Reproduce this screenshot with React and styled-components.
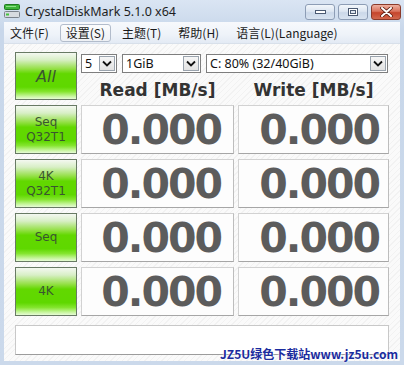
import React from 'react';
import styled, { createGlobalStyle } from 'styled-components';

const GlobalStyle = createGlobalStyle`
  html, body {
    margin: 0;
    padding: 0;
    overflow: hidden;
  }
  body {
    font-family: "Noto Sans", "Noto Sans CJK SC", sans-serif;
  }
`;

const Window = styled.div`
  position: relative;
  width: 404px;
  height: 365px;
  box-sizing: border-box;
  padding: 0 4px 4px;
  display: flex;
  flex-direction: column;
  background: linear-gradient(#dae5f3, #c8d7ea 30px, #cbd9eb);
`;

const TitleBar = styled.div`
  height: 22px;
  display: flex;
  align-items: center;
`;

const Title = styled.span`
  margin-left: 5px;
  font-size: 12.5px;
  color: #1e1e1e;
  flex: 1;
`;

const Caption = styled.div`
  display: flex;
  gap: 3px;
  margin-right: -1px;
  margin-top: 1px;
`;

const CaptionButton = styled.div`
  width: 30px;
  height: 16px;
  box-sizing: border-box;
  border: 1px solid ${p => (p.close ? '#8a3a2a' : '#8d9db5')};
  border-radius: 3px;
  display: flex;
  align-items: center;
  justify-content: center;
  background: ${p =>
    p.close
      ? 'linear-gradient(#eeb0a0, #d9725c 45%, #c5452c 55%, #d2684e)'
      : 'linear-gradient(#f2f6fb, #dde6f1 45%, #cbd8e9 55%, #d8e3f0)'};
`;

const MenuBar = styled.div`
  height: 21px;
  display: flex;
  align-items: center;
  gap: 5px;
  background: linear-gradient(#f7f9fc, #eef3f9 60%, #e3eaf4);
  border-bottom: 1px solid #d8e0ea;
`;

const MenuItem = styled.div`
  height: 16px;
  display: flex;
  align-items: center;
  padding: 0 5px;
  font-family: "Noto Sans CJK SC", "Noto Sans", sans-serif;
  font-size: 12px;
  color: #1a1a1a;
  border: 1px solid ${p => (p.active ? '#b2bccb' : 'transparent')};
  border-radius: 3px;
  background: ${p => (p.active ? 'linear-gradient(#fbfcfd, #eef1f5)' : 'transparent')};
`;

const Client = styled.div`
  flex: 1;
  padding: 8px 0 0 11px;
  background: repeating-linear-gradient(135deg, #fafafa 0px, #fafafa 3px, #f2f2f2 3px, #f2f2f2 4px);
`;

const Board = styled.div`
  display: grid;
  grid-template-columns: 62px 153px 151px;
  grid-template-rows: 48px repeat(4, 49px);
  column-gap: 4px;
  row-gap: 5px;
`;

const TestButton = styled.div`
  box-sizing: border-box;
  border: 1px solid #687a64;
  display: flex;
  flex-direction: column;
  align-items: center;
  justify-content: center;
  font-family: "DejaVu Sans", sans-serif;
  font-size: ${p => (p.big ? '16px' : '12px')};
  font-style: ${p => (p.big ? 'italic' : 'normal')};
  line-height: 15px;
  color: #3a5530;
  background: linear-gradient(#f4f8f1 0%, #d8efc6 15%, #95e048 34%, #62d800 45%, #5fd800 74%, #84e52e 84%, #c6f59c 94%, #e6fcd6 100%);
`;

const TopArea = styled.div`
  grid-column: 2 / 4;
  display: flex;
  flex-direction: column;
`;

const SelectRow = styled.div`
  margin-top: 2px;
  display: flex;
  gap: 5px;
`;

const Select = styled.div`
  width: ${p => p.w}px;
  height: 19px;
  box-sizing: border-box;
  border: 1px solid #7e7e7e;
  background: #fff;
  display: flex;
  align-items: center;
  font-family: "Noto Sans", sans-serif;
  font-size: 12.5px;
  color: #111;
`;

const SelectText = styled.span`
  flex: 1;
  padding-left: 3px;
  white-space: nowrap;
  overflow: hidden;
`;

const Arrow = styled.div`
  width: 16px;
  height: 15px;
  margin-right: 1px;
  box-sizing: border-box;
  border: 1px solid #9aa3ad;
  background: linear-gradient(#f6f6f6, #e2e2e2);
  display: flex;
  align-items: center;
  justify-content: center;
`;

const Headers = styled.div`
  display: grid;
  grid-template-columns: 153px 151px;
  column-gap: 4px;
  margin-top: 7px;
`;

const Header = styled.div`
  text-align: center;
  font-family: "DejaVu Sans", sans-serif;
  font-weight: bold;
  font-size: 17px;
  line-height: 20px;
  color: #333;
`;

const ValueBox = styled.div`
  box-sizing: border-box;
  background: #fdfdfd;
  border: 1px solid #d2d2d2;
  border-right-color: #bdbdbd;
  border-bottom-color: #a6a6a6;
  display: flex;
  align-items: center;
  justify-content: flex-end;
  padding-right: ${p => p.pr}px;
  font-family: "DejaVu Sans", sans-serif;
  font-weight: bold;
  font-size: 41px;
  letter-spacing: -2px;
  color: #5c5c5c;
`;

const Comment = styled.div`
  margin-top: 9px;
  width: 374px;
  height: 30px;
  box-sizing: border-box;
  background: #fff;
  border: 1px solid #c8c8c8;
  border-bottom-color: #9c9c9c;
`;

const Watermark = styled.div`
  position: absolute;
  right: 6px;
  bottom: 3px;
  font-family: "Noto Sans CJK SC", "Noto Sans", sans-serif;
  font-weight: bold;
  font-size: 12px;
  color: #1b2c9e;
  text-shadow: 0 0 2px #fff, 0 0 2px #fff;
`;

const DiskIcon = () => (
  <svg width="16" height="16" viewBox="0 0 16 16">
    <rect x="0.5" y="1.5" width="15" height="5" rx="1" fill="#3db43a" stroke="#1f7a22" />
    <rect x="2" y="3" width="10" height="1" fill="#8ee08a" />
    <rect x="0.5" y="8.5" width="15" height="6" rx="1" fill="#d7dbe0" stroke="#7b838c" />
    <rect x="2" y="10.5" width="3" height="2" fill="#45c43f" />
  </svg>
);

const Chevron = () => (
  <svg width="10" height="7" viewBox="0 0 10 7">
    <polyline points="1,1.5 5,5.5 9,1.5" fill="none" stroke="#111" strokeWidth="1.8" />
  </svg>
);

const MinGlyph = () => (
  <svg width="11" height="6" viewBox="0 0 11 6">
    <rect x="0.5" y="1.5" width="10" height="3" fill="#fff" stroke="#4b5a72" />
  </svg>
);

const MaxGlyph = () => (
  <svg width="10" height="8" viewBox="0 0 10 8">
    <rect x="0.5" y="0.5" width="9" height="7" fill="#fff" stroke="#4b5a72" />
    <rect x="2.5" y="2.5" width="5" height="3" fill="#dfe6ef" stroke="#4b5a72" />
  </svg>
);

const CloseGlyph = () => (
  <svg width="13" height="10" viewBox="0 0 13 10">
    <path d="M2 1 L11 9 M11 1 L2 9" stroke="#5a1c10" strokeWidth="3.6" strokeLinecap="round" />
    <path d="M2 1 L11 9 M11 1 L2 9" stroke="#fff" strokeWidth="2" strokeLinecap="round" />
  </svg>
);

const menus = ['文件(F)', '设置(S)', '主题(T)', '帮助(H)', '语言(L)(Language)'];

const tests = [
  { label: ['Seq', 'Q32T1'] },
  { label: ['4K', 'Q32T1'] },
  { label: ['Seq'] },
  { label: ['4K'] },
];

const Dropdown = ({ w, value }) => (
  <Select w={w}>
    <SelectText>{value}</SelectText>
    <Arrow>
      <Chevron />
    </Arrow>
  </Select>
);

export default function App() {
  return (
    <Window>
      <GlobalStyle />
      <TitleBar>
        <DiskIcon />
        <Title>CrystalDiskMark 5.1.0 x64</Title>
        <Caption>
          <CaptionButton><MinGlyph /></CaptionButton>
          <CaptionButton><MaxGlyph /></CaptionButton>
          <CaptionButton close><CloseGlyph /></CaptionButton>
        </Caption>
      </TitleBar>
      <MenuBar>
        {menus.map((m, i) => (
          <MenuItem key={m} active={i === 1}>{m}</MenuItem>
        ))}
      </MenuBar>
      <Client>
        <Board>
          <TestButton big>All</TestButton>
          <TopArea>
            <SelectRow>
              <Dropdown w={36} value="5" />
              <Dropdown w={79} value="1GiB" />
              <Dropdown w={182} value="C: 80% (32/40GiB)" />
            </SelectRow>
            <Headers>
              <Header>Read [MB/s]</Header>
              <Header>Write [MB/s]</Header>
            </Headers>
          </TopArea>
          {tests.map((t, i) => (
            <React.Fragment key={i}>
              <TestButton>
                {t.label.map(l => <span key={l}>{l}</span>)}
              </TestButton>
              <ValueBox pr={12}>0.000</ValueBox>
              <ValueBox pr={9}>0.000</ValueBox>
            </React.Fragment>
          ))}
        </Board>
        <Comment />
      </Client>
      <Watermark>JZ5U绿色下载站www.jz5u.com</Watermark>
    </Window>
  );
}
